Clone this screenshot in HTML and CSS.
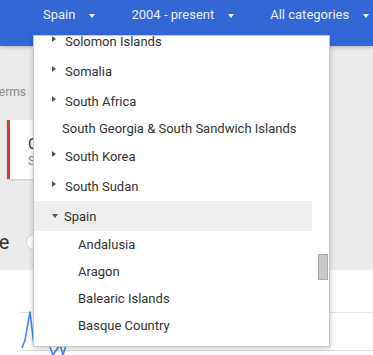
FILE: index.html
```html
<!DOCTYPE html>
<html lang="en">
<head>
    <meta charset="UTF-8">
    <meta name="viewport" content="width=device-width, initial-scale=1.0">
    <title>Explore - Spain</title>
    <link rel="stylesheet" href="styles.css">
</head>
<body>
    <header class="topbar">
        <div class="filter">Spain <span class="caret"></span></div>
        <div class="filter">2004 - present <span class="caret"></span></div>
        <div class="filter">All categories <span class="caret"></span></div>
    </header>

    <main class="page">
        <p class="compare-label">Search terms</p>
        <div class="term-card">
            <div class="term-name">Compare</div>
            <div class="term-sub">Search term</div>
        </div>
        <div class="interest-head">
            <h2>Interest over time</h2>
            <span class="help"></span>
        </div>
    </main>

    <section class="chart">
        <svg width="373" height="85" viewBox="0 0 373 85">
            <line x1="20" y1="42.5" x2="373" y2="42.5" stroke="#e3e3e3" stroke-width="1"/>
            <line x1="20" y1="80.5" x2="373" y2="80.5" stroke="#e3e3e3" stroke-width="1"/>
            <polyline points="22,78 25,70 30,42 34,76 40,62 46,70 50,77 53,85 57,79 60,75 63,85 67,72"
                fill="none" stroke="#4285f4" stroke-width="1.6" stroke-linejoin="round"/>
        </svg>
    </section>

    <!-- location picker, opened -->
    <div class="geo-menu">
        <ul class="geo-list">
            <li class="geo-item"><span class="arrow-right"></span>Solomon Islands</li>
            <li class="geo-item"><span class="arrow-right"></span>Somalia</li>
            <li class="geo-item"><span class="arrow-right"></span>South Africa</li>
            <li class="geo-item leaf">South Georgia &amp; South Sandwich Islands</li>
            <li class="geo-item"><span class="arrow-right"></span>South Korea</li>
            <li class="geo-item"><span class="arrow-right"></span>South Sudan</li>
            <li class="geo-item open"><span class="arrow-down"></span>Spain</li>
            <li class="geo-item sub">Andalusia</li>
            <li class="geo-item sub">Aragon</li>
            <li class="geo-item sub">Balearic Islands</li>
            <li class="geo-item sub">Basque Country</li>
            <li class="geo-item sub">Canary Islands</li>
        </ul>
        <div class="scroll-track">
            <div class="scroll-thumb"></div>
        </div>
    </div>
</body>
</html>
```

FILE: styles.css
```css
* {
    box-sizing: border-box;
}

body {
    margin: 0;
    width: 373px;
    height: 355px;
    overflow: hidden;
    position: relative;
    font-family: Roboto, "Noto Sans", Arial, sans-serif;
    background-color: #fff;
    color: #333;
}

.topbar {
    position: relative;
    z-index: 1;
    height: 46px;
    display: flex;
    gap: 36px;
    padding: 6px 0 0 43px;
    background-color: #3367d6;
    color: rgba(255, 255, 255, 0.92);
    font-size: 13px;
    line-height: 18px;
    white-space: nowrap;
    box-shadow: 0 1px 4px rgba(0, 0, 0, 0.25);
}

.filter {
    display: flex;
    align-items: center;
    gap: 14px;
    height: 18px;
}

.caret {
    width: 0;
    height: 0;
    margin-top: 2px;
    border-left: 3.5px solid transparent;
    border-right: 3.5px solid transparent;
    border-top: 4px solid currentColor;
}

.page {
    height: 224px;
    padding-top: 38px;
    background-color: #ebebeb;
    overflow: hidden;
}

.compare-label {
    margin: 0 0 20px -45px;
    font-size: 12px;
    line-height: 16px;
    color: #8a8a8a;
    white-space: nowrap;
}

.term-card {
    width: 300px;
    height: 59px;
    margin-left: 7px;
    padding: 14px 0 0 18px;
    background-color: #fff;
    border-left: 3px solid #d93a30;
    box-shadow: 0 1px 2px rgba(0, 0, 0, 0.15);
}

.term-name {
    font-size: 15px;
    line-height: 20px;
    color: #333;
}

.term-sub {
    font-size: 12px;
    line-height: 14px;
    color: #8a8a8a;
}

.interest-head {
    display: flex;
    align-items: center;
    margin: 49px 0 0 -146px;
    white-space: nowrap;
}

.interest-head h2 {
    margin: 0;
    font-size: 20px;
    font-weight: 400;
    line-height: 28px;
    color: #333;
}

.help {
    width: 16px;
    height: 16px;
    margin-left: 17px;
    border: 1px solid #d6d6d6;
    border-radius: 50%;
    background-color: #fff;
}

.chart {
    height: 85px;
}

.chart svg {
    display: block;
}

.geo-menu {
    position: absolute;
    z-index: 2;
    left: 33px;
    top: 35px;
    width: 297px;
    height: 312px;
    display: flex;
    overflow: hidden;
    background-color: #fff;
    border: 1px solid #c6c6c6;
    box-shadow: 0 2px 6px rgba(0, 0, 0, 0.2);
}

.geo-list {
    flex: 1;
    margin: -10px 0 0;
    padding: 0;
    list-style: none;
    font-size: 13px;
    color: #333;
}

.geo-item {
    height: 30px;
    display: flex;
    align-items: center;
    gap: 9px;
    padding-left: 18px;
    white-space: nowrap;
}

.geo-item.leaf {
    height: 25px;
    padding-left: 28px;
}

.geo-item.open {
    gap: 6px;
    background-color: #eee;
}

.geo-item.sub {
    height: 27px;
    padding-left: 44px;
}

.arrow-right {
    width: 0;
    height: 0;
    border-top: 3.5px solid transparent;
    border-bottom: 3.5px solid transparent;
    border-left: 4px solid #555;
    margin-top: -4px;
}

.arrow-down {
    width: 0;
    height: 0;
    border-left: 3.5px solid transparent;
    border-right: 3.5px solid transparent;
    border-top: 4px solid #555;
}

.scroll-track {
    width: 17px;
    padding: 218px 1px 0 6px;
}

.scroll-thumb {
    height: 26px;
    background-color: #c9c9c9;
    border: 1px solid #a9a9a9;
}
```
